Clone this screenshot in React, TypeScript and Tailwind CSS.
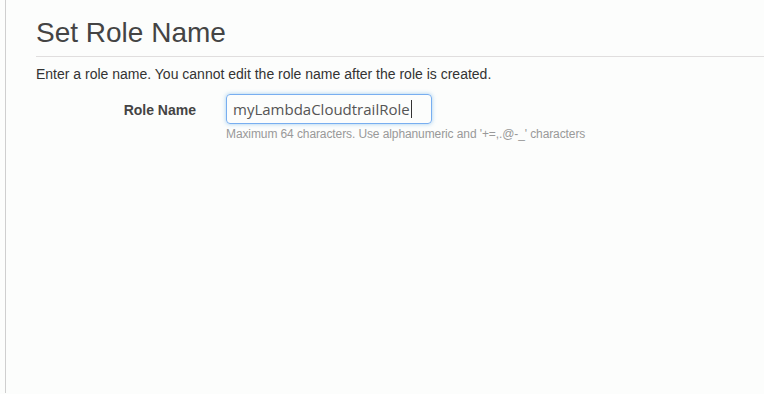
export default function App() {
  return (
    <div className="h-[394px] w-[764px] overflow-hidden bg-[#fcfdfc] font-['Liberation_Sans',Arial,sans-serif]">
      <div className="ml-[5px] h-[393px] border-l border-[#cfcfcf] pl-[30px] pt-[16px]">
        <h1 className="border-b border-[#e0dede] pb-[6px] text-[28px] leading-[34px] text-[#444]">Set Role Name</h1>
        <p className="mt-[9px] text-[14px] leading-[17px] text-[#333]">
          Enter a role name. You cannot edit the role name after the role is created.
        </p>
        <div className="mt-[11px] flex items-start">
          <label className="w-[190px] pr-[30px] pt-[6px] text-right text-[14px] font-bold text-[#444]">Role Name</label>
          <div className="flex flex-col">
            <div className="flex h-[30px] w-[206px] items-center rounded-[4px] border border-[#78aef0] px-[6px] shadow-[0_0_4px_rgba(102,175,233,0.6)]">
              <span className="font-['Open_Sans',sans-serif] text-[15px] text-[#555]">myLambdaCloudtrailRole</span>
              <span className="ml-[1px] h-[18px] w-px bg-[#333]" />
            </div>
            <span className="mt-[1px] text-[12px] tracking-[-0.1px] text-[#999]">
              Maximum 64 characters. Use alphanumeric and '+=,.@-_' characters
            </span>
          </div>
        </div>
      </div>
    </div>
  )
}
